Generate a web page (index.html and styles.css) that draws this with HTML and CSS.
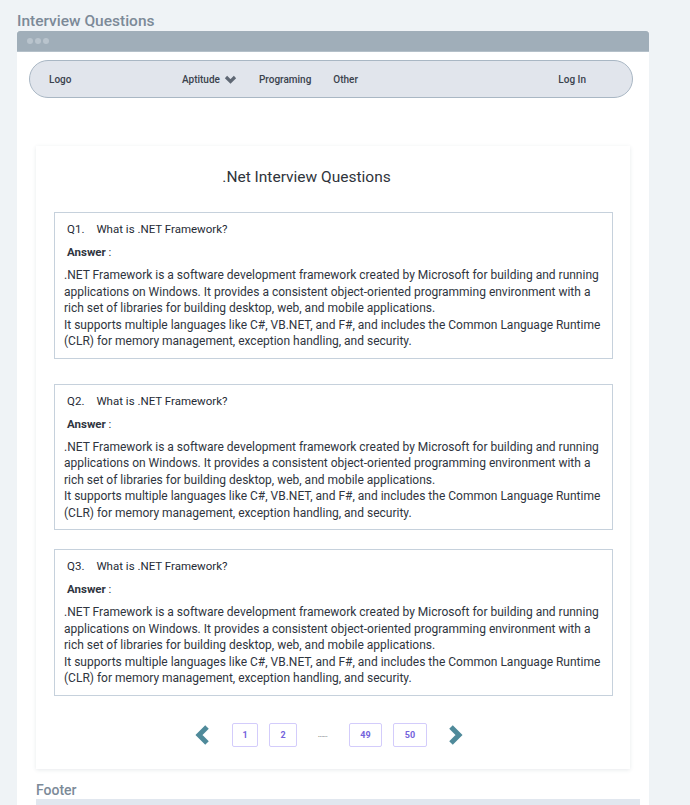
FILE: index.html
```html
<!DOCTYPE html>
<html>
<head>
<meta charset="utf-8">
<link rel="stylesheet" href="styles.css">
</head>
<body>
<div class="page">
  <h1 class="page-title">Interview Questions</h1>
  <div class="window">
    <div class="titlebar">
      <span class="dot"></span><span class="dot"></span><span class="dot"></span>
    </div>
    <div class="window-body">
      <nav class="navbar">
        <span class="nav-logo">Logo</span>
        <span class="nav-item nav-aptitude">Aptitude
          <svg class="nav-chev" width="13" height="9" viewBox="0 0 13 9"><polyline points="2,2 6.5,6.5 11,2" fill="none" stroke="#5f6874" stroke-width="3.2"/></svg>
        </span>
        <span class="nav-item">Programing</span>
        <span class="nav-item">Other</span>
        <span class="nav-login">Log In</span>
      </nav>

      <main class="card">
        <h2 class="card-title">.Net Interview Questions</h2>

        <section class="qa">
          <div class="q"><span class="q-num">Q1.</span>What is .NET Framework?</div>
          <div class="a-label"><b>Answer</b> :</div>
          <p class="a-text">.NET Framework is a software development framework created by Microsoft for building and running applications on Windows. It provides a consistent object-oriented programming environment with a rich set of libraries for building desktop, web, and mobile applications.<br>It supports multiple languages like C#, VB.NET, and F#, and includes the Common Language Runtime (CLR) for memory management, exception handling, and security.</p>
        </section>

        <section class="qa">
          <div class="q"><span class="q-num">Q2.</span>What is .NET Framework?</div>
          <div class="a-label"><b>Answer</b> :</div>
          <p class="a-text">.NET Framework is a software development framework created by Microsoft for building and running applications on Windows. It provides a consistent object-oriented programming environment with a rich set of libraries for building desktop, web, and mobile applications.<br>It supports multiple languages like C#, VB.NET, and F#, and includes the Common Language Runtime (CLR) for memory management, exception handling, and security.</p>
        </section>

        <section class="qa">
          <div class="q"><span class="q-num">Q3.</span>What is .NET Framework?</div>
          <div class="a-label"><b>Answer</b> :</div>
          <p class="a-text">.NET Framework is a software development framework created by Microsoft for building and running applications on Windows. It provides a consistent object-oriented programming environment with a rich set of libraries for building desktop, web, and mobile applications.<br>It supports multiple languages like C#, VB.NET, and F#, and includes the Common Language Runtime (CLR) for memory management, exception handling, and security.</p>
        </section>

        <div class="pager">
          <svg class="pager-arrow prev" width="17" height="22" viewBox="0 0 17 22"><polyline points="13,3 5,11 13,19" fill="none" stroke="#4f8a9a" stroke-width="5"/></svg>
          <span class="page-btn w26">1</span>
          <span class="page-btn w28">2</span>
          <span class="page-dots">......</span>
          <span class="page-btn w33">49</span>
          <span class="page-btn w34">50</span>
          <svg class="pager-arrow next" width="16" height="22" viewBox="0 0 16 22"><polyline points="3,3 11,11 3,19" fill="none" stroke="#4f8a9a" stroke-width="5"/></svg>
        </div>
      </main>

      <div class="footer-label">Footer</div>
      <div class="footer-bar"></div>
    </div>
  </div>
</div>
</body>
</html>
```

FILE: styles.css
```css
* { box-sizing: border-box; }
html, body { margin: 0; padding: 0; }
body {
  background: #eff3f6;
  font-family: Roboto, "Liberation Sans", sans-serif;
  color: #333a44;
  width: 690px;
  height: 805px;
  overflow: hidden;
}
.page { padding: 12px 0 0 17px; }
.page-title {
  margin: 0 0 1px 0;
  font-size: 15.5px;
  line-height: 18px;
  font-weight: 500;
  color: #7c8a98;
}
.window {
  width: 632px;
  background: #fff;
  height: 800px;
}
.titlebar {
  height: 21px;
  background: #a0aeb9;
  border-radius: 3px 3px 0 0;
  display: flex;
  align-items: center;
  gap: 2px;
  padding-left: 10px;
  border-bottom: 1px solid #b4c0c9;
}
.dot {
  width: 6px;
  height: 6px;
  border-radius: 50%;
  background: #b9c4cd;
}
.window-body { padding: 8px 16px 0 12px; }
.navbar {
  height: 38px;
  background: #e1e5ec;
  border: 1px solid #a9b7c4;
  border-radius: 19px;
  display: flex;
  align-items: center;
  font-size: 10px;
  font-weight: 500;
  color: #3a424d;
  padding-left: 19px;
}
.nav-logo { width: 133px; }
.nav-item { margin-right: 22px; display: inline-flex; align-items: center; }
.nav-chev { margin-left: 4px; }
.nav-login { margin-left: auto; margin-right: 46px; }
.card {
  margin: 48px 0 0 7px;
  width: 594px;
  background: #fff;
  box-shadow: 0 1px 4px rgba(60, 80, 100, 0.12);
  padding: 20px 17px 14px 18px;
}
.card-title {
  margin: 0 0 24px 0;
  padding-right: 54px;
  text-align: center;
  font-size: 15.5px;
  line-height: 22px;
  font-weight: 400;
  color: #2f343b;
}
.qa {
  border: 1px solid #c6d1dc;
  padding: 8px 10px 8px 9px;
  margin-bottom: 19px;
}
.qa:first-of-type { margin-bottom: 25px; }
.q {
  font-size: 11.5px;
  line-height: 16px;
  padding-left: 3px;
  font-weight: 400;
  color: #252b35;
}
.q-num { margin-right: 12px; }
.a-label {
  font-size: 11.5px;
  line-height: 16px;
  margin-top: 7px;
  padding-left: 3px;
  color: #2f3540;
}
.a-label b { font-weight: 700; }
.a-text {
  margin: 7px 0 0 0;
  font-size: 12px;
  line-height: 16.5px;
  color: #2f3540;
}
.pager {
  display: flex;
  align-items: center;
  justify-content: center;
  margin-top: 8px;
  height: 40px;
  padding-right: 9px;
}
.pager-arrow.prev { margin-right: 21px; }
.pager-arrow.next { margin-left: 21px; }
.page-btn {
  height: 24px;
  border: 1px solid #d3ccfb;
  border-radius: 2px;
  color: #7463dc;
  font-size: 9px;
  font-weight: 700;
  display: flex;
  align-items: center;
  justify-content: center;
}
.w26 { width: 26px; margin-right: 11px; }
.w28 { width: 28px; }
.w33 { width: 33px; margin-right: 11px; }
.w34 { width: 34px; }
.page-dots {
  width: 15px;
  margin: 0 19px 0 18px;
  text-align: center;
  font-size: 8px;
  color: #666;
  letter-spacing: -0.5px;
}
.footer-label {
  margin: 13px 0 0 7px;
  font-size: 14px;
  line-height: 17px;
  font-weight: 500;
  color: #7c8a98;
}
.footer-bar {
  margin: 0 0 0 7px;
  width: 604px;
  height: 20px;
  background: #e1e7ef;
}
```
